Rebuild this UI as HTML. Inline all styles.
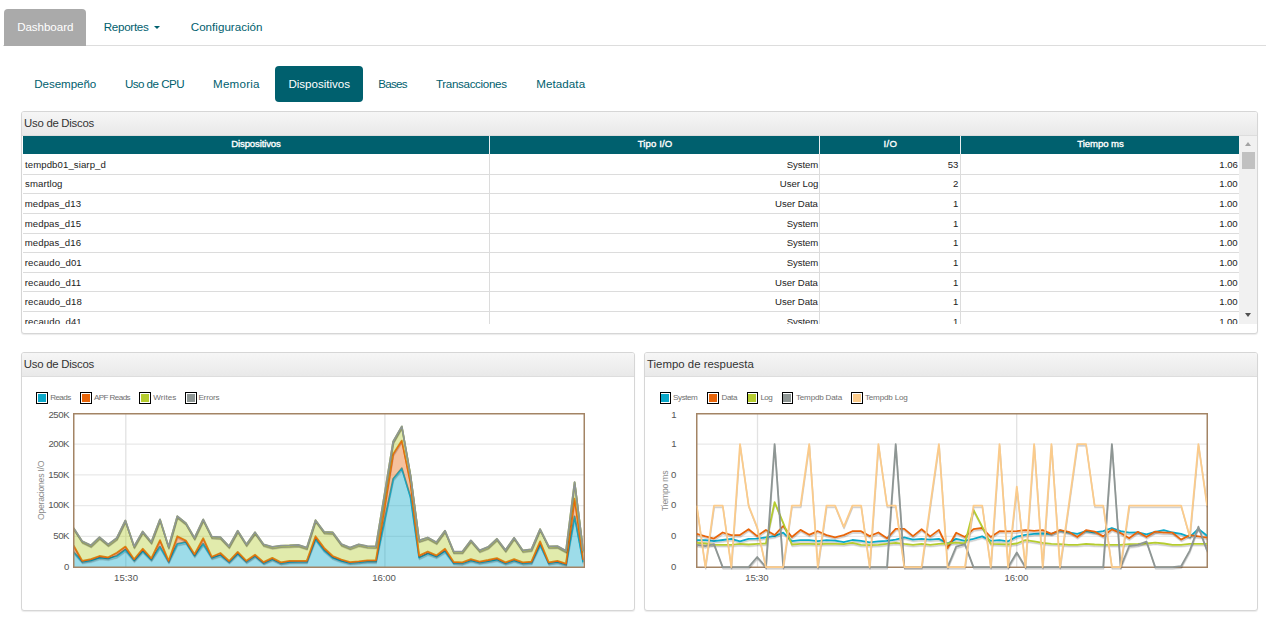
<!DOCTYPE html>
<html lang="es"><head><meta charset="utf-8"><title>Dashboard</title>
<style>
html,body{margin:0;padding:0;background:#fff;}
body{width:1266px;height:619px;position:relative;overflow:hidden;font-family:"Liberation Sans", sans-serif;}
.t{position:absolute;white-space:nowrap;line-height:1;font-family:"Liberation Sans", sans-serif;}
.abs{position:absolute;}
.panel{position:absolute;box-sizing:border-box;border:1px solid #d6d6d6;border-radius:3px;background:#fff;box-shadow:0 1px 1px rgba(0,0,0,.08);}
.phead{position:absolute;left:0;top:0;right:0;height:23px;border-bottom:1px solid #ddd;border-radius:2px 2px 0 0;background:linear-gradient(to bottom,#f6f6f6 0%,#e9e9e9 100%);}
.lg{position:absolute;box-sizing:border-box;width:12px;height:12px;border:1px solid #000;padding:1px;background:#fff;}
.lg i{display:block;width:8px;height:8px;}
.hl{position:absolute;left:23px;width:1217px;height:1px;background:#dcdcdc;}
.vl{position:absolute;top:136px;width:1px;height:188px;background:#dcdcdc;}
.ylab{position:absolute;white-space:nowrap;line-height:1;transform-origin:0 0;transform:rotate(-90deg);color:#8c8c8c;font-size:8.6px;}
</style></head><body>
<div class="abs" style="left:3px;top:45px;width:1263px;height:1px;background:#ddd;"></div>
<div class="abs" style="left:4px;top:9px;width:82px;height:36.5px;background:#aaa;border-radius:4px 4px 0 0;"></div>
<div class="abs" style="left:154px;top:25.9px;width:0;height:0;border-left:3px solid transparent;border-right:3px solid transparent;border-top:3.1px solid #00606e;"></div>
<div class="abs" style="left:275px;top:66px;width:88px;height:35.7px;background:#00606e;border-radius:4px;"></div>
<div class="panel" style="left:21px;top:111px;width:1237px;height:223px;"><div class="phead"></div></div>
<div class="abs" style="left:23px;top:136px;width:1216px;height:18px;background:#00606e;"></div>
<div class="vl" style="left:489px;"></div>
<div class="vl" style="left:819px;"></div>
<div class="vl" style="left:960px;"></div>
<div class="abs" style="left:489px;top:136px;width:1px;height:18px;background:#e8eef0;"></div>
<div class="abs" style="left:819px;top:136px;width:1px;height:18px;background:#e8eef0;"></div>
<div class="abs" style="left:960px;top:136px;width:1px;height:18px;background:#e8eef0;"></div>
<div class="hl" style="top:174px;"></div>
<div class="hl" style="top:193px;"></div>
<div class="hl" style="top:213px;"></div>
<div class="hl" style="top:233px;"></div>
<div class="hl" style="top:252px;"></div>
<div class="hl" style="top:272px;"></div>
<div class="hl" style="top:291px;"></div>
<div class="hl" style="top:311px;"></div>
<div class="abs" style="left:1239px;top:136px;width:18px;height:188px;background:#f1f1f1;"></div>
<div class="abs" style="left:1242px;top:152px;width:13px;height:17px;background:#c1c1c1;"></div>
<div class="abs" style="left:1244.8px;top:141.6px;width:0;height:0;border-left:3.8px solid transparent;border-right:3.8px solid transparent;border-bottom:4.2px solid #a3a3a3;"></div>
<div class="abs" style="left:1244.8px;top:312.6px;width:0;height:0;border-left:3.8px solid transparent;border-right:3.8px solid transparent;border-top:4.2px solid #505050;"></div>
<div class="panel" style="left:21px;top:352px;width:614px;height:259px;"><div class="phead"></div></div>
<div class="panel" style="left:644px;top:352px;width:614px;height:259px;"><div class="phead"></div></div>
<div class="lg" style="left:36px;top:392px;"><i style="background:#0aa8c9"></i></div>
<div class="lg" style="left:80px;top:392px;"><i style="background:#e8650a"></i></div>
<div class="lg" style="left:139px;top:392px;"><i style="background:#b5cc2f"></i></div>
<div class="lg" style="left:185px;top:392px;"><i style="background:#8e9694"></i></div>
<div class="lg" style="left:660px;top:392px;width:11px;padding-left:0;"><i style="background:#0aa8c9"></i></div>
<div class="lg" style="left:707px;top:392px;width:12px;"><i style="background:#e8650a"></i></div>
<div class="lg" style="left:747px;top:392px;width:11px;padding-left:0;"><i style="background:#b5cc2f"></i></div>
<div class="lg" style="left:782px;top:392px;width:11px;padding-left:0;"><i style="background:#8e9694"></i></div>
<div class="lg" style="left:851px;top:392px;width:12px;"><i style="background:#fbcb8b"></i></div>
<svg class="abs" style="left:0;top:340px;" width="1266" height="279" viewBox="0 340 1266 279">
<defs><clipPath id="cl"><rect x="73.6" y="412" width="510" height="158.5"/></clipPath><clipPath id="cr"><rect x="696.6" y="412" width="510.6" height="158.5"/></clipPath></defs>
<line x1="74" x2="584" y1="444.1" y2="444.1" stroke="#e9e9e9" stroke-width="1.3"/>
<line x1="74" x2="584" y1="474.9" y2="474.9" stroke="#e9e9e9" stroke-width="1.3"/>
<line x1="74" x2="584" y1="505.6" y2="505.6" stroke="#e9e9e9" stroke-width="1.3"/>
<line x1="74" x2="584" y1="536.4" y2="536.4" stroke="#e9e9e9" stroke-width="1.3"/>
<line x1="125.8" x2="125.8" y1="414" y2="567" stroke="#e2e2e2" stroke-width="1.3"/>
<line x1="384.9" x2="384.9" y1="414" y2="567" stroke="#e2e2e2" stroke-width="1.3"/>
<g clip-path="url(#cl)">
<polygon points="73.6,551.9 82.2,561.6 90.9,560.3 99.5,557.6 108.2,558.4 116.8,556.0 125.4,549.8 134.1,560.3 142.7,551.1 151.3,559.5 160.0,546.6 168.6,561.6 177.3,543.8 185.9,542.2 194.5,555.6 203.2,543.8 211.8,557.6 220.4,555.0 229.1,561.8 237.7,553.5 246.4,561.6 255.0,556.0 263.6,562.8 272.3,559.2 280.9,563.0 289.5,561.8 298.2,561.6 306.8,561.6 315.5,539.0 324.1,550.3 332.7,557.6 341.4,560.8 350.0,562.9 358.7,562.1 367.3,561.3 375.9,561.3 384.6,520.0 393.2,478.8 401.8,468.3 410.5,497.0 419.1,557.5 427.8,553.4 436.4,556.5 445.0,551.1 453.7,562.9 462.3,563.2 470.9,560.3 479.6,562.4 488.2,561.1 496.9,559.5 505.5,563.2 514.1,560.3 522.8,563.2 531.4,562.7 540.1,544.6 548.7,563.2 557.3,561.9 566.0,564.4 574.6,516.4 583.2,562.4 583.2,567.1 574.6,567.1 566.0,567.1 557.3,567.1 548.7,567.1 540.1,567.1 531.4,567.1 522.8,567.1 514.1,567.1 505.5,567.1 496.9,567.1 488.2,567.1 479.6,567.1 470.9,567.1 462.3,567.1 453.7,567.1 445.0,567.1 436.4,567.1 427.8,567.1 419.1,567.1 410.5,567.1 401.8,567.1 393.2,567.1 384.6,567.1 375.9,567.1 367.3,567.1 358.7,567.1 350.0,567.1 341.4,567.1 332.7,567.1 324.1,567.1 315.5,567.1 306.8,567.1 298.2,567.1 289.5,567.1 280.9,567.1 272.3,567.1 263.6,567.1 255.0,567.1 246.4,567.1 237.7,567.1 229.1,567.1 220.4,567.1 211.8,567.1 203.2,567.1 194.5,567.1 185.9,567.1 177.3,567.1 168.6,567.1 160.0,567.1 151.3,567.1 142.7,567.1 134.1,567.1 125.4,567.1 116.8,567.1 108.2,567.1 99.5,567.1 90.9,567.1 82.2,567.1 73.6,567.1" fill="#0aa8c9" fill-opacity="0.4"/>
<polyline points="74.0,554.1 82.6,563.8 91.3,562.5 99.9,559.8 108.6,560.6 117.2,558.2 125.8,552.0 134.5,562.5 143.1,553.3 151.7,561.7 160.4,548.8 169.0,563.8 177.7,546.0 186.3,544.4 194.9,557.8 203.6,546.0 212.2,559.8 220.8,557.2 229.5,564.0 238.1,555.7 246.8,563.8 255.4,558.2 264.0,565.0 272.7,561.4 281.3,565.2 289.9,564.0 298.6,563.8 307.2,563.8 315.9,541.2 324.5,552.5 333.1,559.8 341.8,563.0 350.4,565.1 359.1,564.3 367.7,563.5 376.3,563.5 385.0,522.2 393.6,481.0 402.2,470.5 410.9,499.2 419.5,559.7 428.2,555.6 436.8,558.7 445.4,553.3 454.1,565.1 462.7,565.4 471.3,562.5 480.0,564.6 488.6,563.3 497.3,561.7 505.9,565.4 514.5,562.5 523.2,565.4 531.8,564.9 540.5,546.8 549.1,565.4 557.7,564.1 566.4,566.6 575.0,518.6 583.6,564.6" fill="none" stroke="#000" stroke-opacity="0.08" stroke-width="1.4" stroke-linejoin="round"/>
<polyline points="73.9,553.4 82.5,563.1 91.2,561.8 99.8,559.1 108.5,559.9 117.1,557.5 125.7,551.3 134.4,561.8 143.0,552.6 151.6,561.0 160.3,548.1 168.9,563.1 177.6,545.3 186.2,543.7 194.8,557.1 203.5,545.3 212.1,559.1 220.7,556.5 229.4,563.3 238.0,555.0 246.7,563.1 255.3,557.5 263.9,564.3 272.6,560.7 281.2,564.5 289.8,563.3 298.5,563.1 307.1,563.1 315.8,540.5 324.4,551.8 333.0,559.1 341.7,562.3 350.3,564.4 359.0,563.6 367.6,562.8 376.2,562.8 384.9,521.5 393.5,480.3 402.1,469.8 410.8,498.5 419.4,559.0 428.1,554.9 436.7,558.0 445.3,552.6 454.0,564.4 462.6,564.7 471.2,561.8 479.9,563.9 488.5,562.6 497.2,561.0 505.8,564.7 514.4,561.8 523.1,564.7 531.7,564.2 540.4,546.1 549.0,564.7 557.6,563.4 566.3,565.9 574.9,517.9 583.5,563.9" fill="none" stroke="#000" stroke-opacity="0.14" stroke-width="1.4" stroke-linejoin="round"/>
<polyline points="73.6,551.9 82.2,561.6 90.9,560.3 99.5,557.6 108.2,558.4 116.8,556.0 125.4,549.8 134.1,560.3 142.7,551.1 151.3,559.5 160.0,546.6 168.6,561.6 177.3,543.8 185.9,542.2 194.5,555.6 203.2,543.8 211.8,557.6 220.4,555.0 229.1,561.8 237.7,553.5 246.4,561.6 255.0,556.0 263.6,562.8 272.3,559.2 280.9,563.0 289.5,561.8 298.2,561.6 306.8,561.6 315.5,539.0 324.1,550.3 332.7,557.6 341.4,560.8 350.0,562.9 358.7,562.1 367.3,561.3 375.9,561.3 384.6,520.0 393.2,478.8 401.8,468.3 410.5,497.0 419.1,557.5 427.8,553.4 436.4,556.5 445.0,551.1 453.7,562.9 462.3,563.2 470.9,560.3 479.6,562.4 488.2,561.1 496.9,559.5 505.5,563.2 514.1,560.3 522.8,563.2 531.4,562.7 540.1,544.6 548.7,563.2 557.3,561.9 566.0,564.4 574.6,516.4 583.2,562.4" fill="none" stroke="#0aa8c9" stroke-width="1.8" stroke-linejoin="round"/>
<polygon points="73.6,545.5 82.2,560.8 90.9,559.2 99.5,556.0 108.2,557.3 116.8,552.7 125.4,546.6 134.1,559.2 142.7,548.7 151.3,558.4 160.0,540.1 168.6,560.8 177.3,536.2 185.9,540.6 194.5,554.3 203.2,538.2 211.8,556.8 220.4,553.0 229.1,561.0 237.7,551.9 246.4,560.8 255.0,554.7 263.6,562.1 272.3,557.9 280.9,562.4 289.5,560.8 298.2,560.8 306.8,560.8 315.5,536.2 324.1,547.9 332.7,556.0 341.4,559.5 350.0,562.1 358.7,561.3 367.3,560.3 375.9,560.3 384.6,507.0 393.2,453.9 401.8,440.6 410.5,482.9 419.1,555.6 427.8,551.5 436.4,555.4 445.0,548.7 453.7,562.0 462.3,562.4 470.9,559.2 479.6,561.6 488.2,560.0 496.9,558.1 505.5,562.4 514.1,559.2 522.8,562.4 531.4,561.6 540.1,541.4 548.7,562.4 557.3,560.8 566.0,563.6 574.6,498.6 583.2,560.0 583.2,562.4 574.6,516.4 566.0,564.4 557.3,561.9 548.7,563.2 540.1,544.6 531.4,562.7 522.8,563.2 514.1,560.3 505.5,563.2 496.9,559.5 488.2,561.1 479.6,562.4 470.9,560.3 462.3,563.2 453.7,562.9 445.0,551.1 436.4,556.5 427.8,553.4 419.1,557.5 410.5,497.0 401.8,468.3 393.2,478.8 384.6,520.0 375.9,561.3 367.3,561.3 358.7,562.1 350.0,562.9 341.4,560.8 332.7,557.6 324.1,550.3 315.5,539.0 306.8,561.6 298.2,561.6 289.5,561.8 280.9,563.0 272.3,559.2 263.6,562.8 255.0,556.0 246.4,561.6 237.7,553.5 229.1,561.8 220.4,555.0 211.8,557.6 203.2,543.8 194.5,555.6 185.9,542.2 177.3,543.8 168.6,561.6 160.0,546.6 151.3,559.5 142.7,551.1 134.1,560.3 125.4,549.8 116.8,556.0 108.2,558.4 99.5,557.6 90.9,560.3 82.2,561.6 73.6,551.9" fill="#e8650a" fill-opacity="0.4"/>
<polyline points="74.0,547.7 82.6,563.0 91.3,561.4 99.9,558.2 108.6,559.5 117.2,554.9 125.8,548.8 134.5,561.4 143.1,550.9 151.7,560.6 160.4,542.3 169.0,563.0 177.7,538.4 186.3,542.8 194.9,556.5 203.6,540.4 212.2,559.0 220.8,555.2 229.5,563.2 238.1,554.1 246.8,563.0 255.4,556.9 264.0,564.3 272.7,560.1 281.3,564.6 289.9,563.0 298.6,563.0 307.2,563.0 315.9,538.4 324.5,550.1 333.1,558.2 341.8,561.7 350.4,564.3 359.1,563.5 367.7,562.5 376.3,562.5 385.0,509.2 393.6,456.1 402.2,442.8 410.9,485.1 419.5,557.8 428.2,553.7 436.8,557.6 445.4,550.9 454.1,564.2 462.7,564.6 471.3,561.4 480.0,563.8 488.6,562.2 497.3,560.3 505.9,564.6 514.5,561.4 523.2,564.6 531.8,563.8 540.5,543.6 549.1,564.6 557.7,563.0 566.4,565.8 575.0,500.8 583.6,562.2" fill="none" stroke="#000" stroke-opacity="0.08" stroke-width="1.4" stroke-linejoin="round"/>
<polyline points="73.9,547.0 82.5,562.3 91.2,560.7 99.8,557.5 108.5,558.8 117.1,554.2 125.7,548.1 134.4,560.7 143.0,550.2 151.6,559.9 160.3,541.6 168.9,562.3 177.6,537.7 186.2,542.1 194.8,555.8 203.5,539.7 212.1,558.3 220.7,554.5 229.4,562.5 238.0,553.4 246.7,562.3 255.3,556.2 263.9,563.6 272.6,559.4 281.2,563.9 289.8,562.3 298.5,562.3 307.1,562.3 315.8,537.7 324.4,549.4 333.0,557.5 341.7,561.0 350.3,563.6 359.0,562.8 367.6,561.8 376.2,561.8 384.9,508.5 393.5,455.4 402.1,442.1 410.8,484.4 419.4,557.1 428.1,553.0 436.7,556.9 445.3,550.2 454.0,563.5 462.6,563.9 471.2,560.7 479.9,563.1 488.5,561.5 497.2,559.6 505.8,563.9 514.4,560.7 523.1,563.9 531.7,563.1 540.4,542.9 549.0,563.9 557.6,562.3 566.3,565.1 574.9,500.1 583.5,561.5" fill="none" stroke="#000" stroke-opacity="0.14" stroke-width="1.4" stroke-linejoin="round"/>
<polyline points="73.6,545.5 82.2,560.8 90.9,559.2 99.5,556.0 108.2,557.3 116.8,552.7 125.4,546.6 134.1,559.2 142.7,548.7 151.3,558.4 160.0,540.1 168.6,560.8 177.3,536.2 185.9,540.6 194.5,554.3 203.2,538.2 211.8,556.8 220.4,553.0 229.1,561.0 237.7,551.9 246.4,560.8 255.0,554.7 263.6,562.1 272.3,557.9 280.9,562.4 289.5,560.8 298.2,560.8 306.8,560.8 315.5,536.2 324.1,547.9 332.7,556.0 341.4,559.5 350.0,562.1 358.7,561.3 367.3,560.3 375.9,560.3 384.6,507.0 393.2,453.9 401.8,440.6 410.5,482.9 419.1,555.6 427.8,551.5 436.4,555.4 445.0,548.7 453.7,562.0 462.3,562.4 470.9,559.2 479.6,561.6 488.2,560.0 496.9,558.1 505.5,562.4 514.1,559.2 522.8,562.4 531.4,561.6 540.1,541.4 548.7,562.4 557.3,560.8 566.0,563.6 574.6,498.6 583.2,560.0" fill="none" stroke="#e8650a" stroke-width="1.8" stroke-linejoin="round"/>
<polygon points="73.6,528.2 82.2,541.4 90.9,545.5 99.5,537.4 108.2,544.6 116.8,538.2 125.4,520.7 134.1,546.6 142.7,531.7 151.3,542.2 160.0,519.6 168.6,547.0 177.3,516.4 185.9,523.3 194.5,538.2 203.2,519.6 211.8,536.9 220.4,537.4 229.1,546.5 237.7,530.9 246.4,544.6 255.0,532.5 263.6,544.6 272.3,547.1 280.9,545.8 289.5,545.5 298.2,545.0 306.8,547.9 315.5,520.4 324.1,532.0 332.7,532.5 341.4,544.3 350.0,547.9 358.7,544.6 367.3,546.3 375.9,546.6 384.6,494.1 393.2,441.7 401.8,426.6 410.5,475.5 419.1,540.5 427.8,537.7 436.4,542.5 445.0,530.9 453.7,551.9 462.3,551.9 470.9,540.6 479.6,550.6 488.2,547.1 496.9,539.0 505.5,550.3 514.1,537.9 522.8,550.6 531.4,549.5 540.1,529.3 548.7,546.6 557.3,546.3 566.0,551.1 574.6,482.4 583.2,551.1 583.2,560.0 574.6,498.6 566.0,563.6 557.3,560.8 548.7,562.4 540.1,541.4 531.4,561.6 522.8,562.4 514.1,559.2 505.5,562.4 496.9,558.1 488.2,560.0 479.6,561.6 470.9,559.2 462.3,562.4 453.7,562.0 445.0,548.7 436.4,555.4 427.8,551.5 419.1,555.6 410.5,482.9 401.8,440.6 393.2,453.9 384.6,507.0 375.9,560.3 367.3,560.3 358.7,561.3 350.0,562.1 341.4,559.5 332.7,556.0 324.1,547.9 315.5,536.2 306.8,560.8 298.2,560.8 289.5,560.8 280.9,562.4 272.3,557.9 263.6,562.1 255.0,554.7 246.4,560.8 237.7,551.9 229.1,561.0 220.4,553.0 211.8,556.8 203.2,538.2 194.5,554.3 185.9,540.6 177.3,536.2 168.6,560.8 160.0,540.1 151.3,558.4 142.7,548.7 134.1,559.2 125.4,546.6 116.8,552.7 108.2,557.3 99.5,556.0 90.9,559.2 82.2,560.8 73.6,545.5" fill="#b5cc2f" fill-opacity="0.4"/>
<polyline points="74.0,530.4 82.6,543.6 91.3,547.7 99.9,539.6 108.6,546.8 117.2,540.4 125.8,522.9 134.5,548.8 143.1,533.9 151.7,544.4 160.4,521.8 169.0,549.2 177.7,518.6 186.3,525.5 194.9,540.4 203.6,521.8 212.2,539.1 220.8,539.6 229.5,548.7 238.1,533.1 246.8,546.8 255.4,534.7 264.0,546.8 272.7,549.3 281.3,548.0 289.9,547.7 298.6,547.2 307.2,550.1 315.9,522.6 324.5,534.2 333.1,534.7 341.8,546.5 350.4,550.1 359.1,546.8 367.7,548.5 376.3,548.8 385.0,496.3 393.6,443.9 402.2,428.8 410.9,477.7 419.5,542.7 428.2,539.9 436.8,544.7 445.4,533.1 454.1,554.1 462.7,554.1 471.3,542.8 480.0,552.8 488.6,549.3 497.3,541.2 505.9,552.5 514.5,540.1 523.2,552.8 531.8,551.7 540.5,531.5 549.1,548.8 557.7,548.5 566.4,553.3 575.0,484.6 583.6,553.3" fill="none" stroke="#000" stroke-opacity="0.08" stroke-width="1.4" stroke-linejoin="round"/>
<polyline points="73.9,529.7 82.5,542.9 91.2,547.0 99.8,538.9 108.5,546.1 117.1,539.7 125.7,522.2 134.4,548.1 143.0,533.2 151.6,543.7 160.3,521.1 168.9,548.5 177.6,517.9 186.2,524.8 194.8,539.7 203.5,521.1 212.1,538.4 220.7,538.9 229.4,548.0 238.0,532.4 246.7,546.1 255.3,534.0 263.9,546.1 272.6,548.6 281.2,547.3 289.8,547.0 298.5,546.5 307.1,549.4 315.8,521.9 324.4,533.5 333.0,534.0 341.7,545.8 350.3,549.4 359.0,546.1 367.6,547.8 376.2,548.1 384.9,495.6 393.5,443.2 402.1,428.1 410.8,477.0 419.4,542.0 428.1,539.2 436.7,544.0 445.3,532.4 454.0,553.4 462.6,553.4 471.2,542.1 479.9,552.1 488.5,548.6 497.2,540.5 505.8,551.8 514.4,539.4 523.1,552.1 531.7,551.0 540.4,530.8 549.0,548.1 557.6,547.8 566.3,552.6 574.9,483.9 583.5,552.6" fill="none" stroke="#000" stroke-opacity="0.14" stroke-width="1.4" stroke-linejoin="round"/>
<polyline points="73.6,528.2 82.2,541.4 90.9,545.5 99.5,537.4 108.2,544.6 116.8,538.2 125.4,520.7 134.1,546.6 142.7,531.7 151.3,542.2 160.0,519.6 168.6,547.0 177.3,516.4 185.9,523.3 194.5,538.2 203.2,519.6 211.8,536.9 220.4,537.4 229.1,546.5 237.7,530.9 246.4,544.6 255.0,532.5 263.6,544.6 272.3,547.1 280.9,545.8 289.5,545.5 298.2,545.0 306.8,547.9 315.5,520.4 324.1,532.0 332.7,532.5 341.4,544.3 350.0,547.9 358.7,544.6 367.3,546.3 375.9,546.6 384.6,494.1 393.2,441.7 401.8,426.6 410.5,475.5 419.1,540.5 427.8,537.7 436.4,542.5 445.0,530.9 453.7,551.9 462.3,551.9 470.9,540.6 479.6,550.6 488.2,547.1 496.9,539.0 505.5,550.3 514.1,537.9 522.8,550.6 531.4,549.5 540.1,529.3 548.7,546.6 557.3,546.3 566.0,551.1 574.6,482.4 583.2,551.1" fill="none" stroke="#b5cc2f" stroke-width="1.8" stroke-linejoin="round"/>
<polyline points="74.0,530.2 82.6,543.4 91.3,547.5 99.9,539.4 108.6,546.6 117.2,540.2 125.8,522.7 134.5,548.6 143.1,533.7 151.7,544.2 160.4,521.6 169.0,549.0 177.7,518.4 186.3,525.3 194.9,540.2 203.6,521.6 212.2,538.9 220.8,539.4 229.5,548.5 238.1,532.9 246.8,546.6 255.4,534.5 264.0,546.6 272.7,549.1 281.3,547.8 289.9,547.5 298.6,547.0 307.2,549.9 315.9,522.4 324.5,534.0 333.1,534.5 341.8,546.3 350.4,549.9 359.1,546.6 367.7,548.3 376.3,548.6 385.0,496.1 393.6,443.7 402.2,428.6 410.9,477.5 419.5,542.5 428.2,539.7 436.8,544.5 445.4,532.9 454.1,553.9 462.7,553.9 471.3,542.6 480.0,552.6 488.6,549.1 497.3,541.0 505.9,552.3 514.5,539.9 523.2,552.6 531.8,551.5 540.5,531.3 549.1,548.6 557.7,548.3 566.4,553.1 575.0,484.4 583.6,553.1" fill="none" stroke="#000" stroke-opacity="0.08" stroke-width="1.4" stroke-linejoin="round"/>
<polyline points="73.9,529.5 82.5,542.7 91.2,546.8 99.8,538.7 108.5,545.9 117.1,539.5 125.7,522.0 134.4,547.9 143.0,533.0 151.6,543.5 160.3,520.9 168.9,548.3 177.6,517.7 186.2,524.6 194.8,539.5 203.5,520.9 212.1,538.2 220.7,538.7 229.4,547.8 238.0,532.2 246.7,545.9 255.3,533.8 263.9,545.9 272.6,548.4 281.2,547.1 289.8,546.8 298.5,546.3 307.1,549.2 315.8,521.7 324.4,533.3 333.0,533.8 341.7,545.6 350.3,549.2 359.0,545.9 367.6,547.6 376.2,547.9 384.9,495.4 393.5,443.0 402.1,427.9 410.8,476.8 419.4,541.8 428.1,539.0 436.7,543.8 445.3,532.2 454.0,553.2 462.6,553.2 471.2,541.9 479.9,551.9 488.5,548.4 497.2,540.3 505.8,551.6 514.4,539.2 523.1,551.9 531.7,550.8 540.4,530.6 549.0,547.9 557.6,547.6 566.3,552.4 574.9,483.7 583.5,552.4" fill="none" stroke="#000" stroke-opacity="0.14" stroke-width="1.4" stroke-linejoin="round"/>
<polyline points="73.6,528.0 82.2,541.2 90.9,545.3 99.5,537.2 108.2,544.4 116.8,538.0 125.4,520.5 134.1,546.4 142.7,531.5 151.3,542.0 160.0,519.4 168.6,546.8 177.3,516.2 185.9,523.1 194.5,538.0 203.2,519.4 211.8,536.7 220.4,537.2 229.1,546.3 237.7,530.7 246.4,544.4 255.0,532.3 263.6,544.4 272.3,546.9 280.9,545.6 289.5,545.3 298.2,544.8 306.8,547.7 315.5,520.2 324.1,531.8 332.7,532.3 341.4,544.1 350.0,547.7 358.7,544.4 367.3,546.1 375.9,546.4 384.6,493.9 393.2,441.5 401.8,426.4 410.5,475.3 419.1,540.3 427.8,537.5 436.4,542.3 445.0,530.7 453.7,551.7 462.3,551.7 470.9,540.4 479.6,550.4 488.2,546.9 496.9,538.8 505.5,550.1 514.1,537.7 522.8,550.4 531.4,549.3 540.1,529.1 548.7,546.4 557.3,546.1 566.0,550.9 574.6,482.2 583.2,550.9" fill="none" stroke="#8e9694" stroke-width="1.8" stroke-linejoin="round"/>
</g>
<rect x="73.75" y="413.75" width="510.5" height="153.5" fill="none" stroke="#a38465" stroke-width="1.5"/>
<line x1="697" x2="1207" y1="444.1" y2="444.1" stroke="#e9e9e9" stroke-width="1.3"/>
<line x1="697" x2="1207" y1="474.9" y2="474.9" stroke="#e9e9e9" stroke-width="1.3"/>
<line x1="697" x2="1207" y1="505.6" y2="505.6" stroke="#e9e9e9" stroke-width="1.3"/>
<line x1="697" x2="1207" y1="536.4" y2="536.4" stroke="#e9e9e9" stroke-width="1.3"/>
<line x1="757.5" x2="757.5" y1="414" y2="567" stroke="#e2e2e2" stroke-width="1.3"/>
<line x1="1016.7" x2="1016.7" y1="414" y2="567" stroke="#e2e2e2" stroke-width="1.3"/>
<rect x="696.75" y="413.75" width="510.5" height="153.5" fill="none" stroke="#a38465" stroke-width="1.5"/>
<g clip-path="url(#cr)">
<polyline points="697.1,542.4 705.8,542.4 714.4,543.3 723.1,542.2 731.7,541.1 740.4,543.5 749.0,541.1 757.6,540.9 766.3,539.6 775.0,538.3 783.6,534.9 792.2,543.3 800.9,542.4 809.6,542.4 818.2,543.3 826.9,542.4 835.5,542.8 844.1,544.4 852.8,542.2 861.5,543.1 870.1,544.6 878.8,543.5 887.4,543.1 896.1,541.8 904.7,539.6 913.4,541.8 922.0,541.1 930.6,541.8 939.3,541.1 948.0,545.7 956.6,541.1 965.3,543.1 973.9,541.1 982.6,538.6 991.2,543.1 999.9,542.4 1008.5,543.5 1017.1,538.8 1025.8,537.0 1034.5,536.0 1043.1,535.7 1051.8,536.0 1060.4,532.7 1069.1,534.7 1077.7,536.0 1086.4,533.4 1095.0,534.7 1103.7,533.4 1112.3,530.2 1121.0,533.4 1129.6,534.9 1138.3,534.7 1146.9,536.6 1155.6,534.0 1164.2,532.4 1172.9,534.7 1181.5,536.0 1190.2,539.2 1198.8,531.1 1207.5,537.9" fill="none" stroke="#000" stroke-opacity="0.08" stroke-width="1.4" stroke-linejoin="round"/>
<polyline points="697.0,541.7 705.6,541.7 714.3,542.6 723.0,541.5 731.6,540.4 740.2,542.8 748.9,540.4 757.5,540.2 766.2,538.9 774.9,537.6 783.5,534.2 792.1,542.6 800.8,541.7 809.5,541.7 818.1,542.6 826.8,541.7 835.4,542.1 844.0,543.7 852.7,541.5 861.4,542.4 870.0,543.9 878.6,542.8 887.3,542.4 896.0,541.1 904.6,538.9 913.2,541.1 921.9,540.4 930.5,541.1 939.2,540.4 947.9,545.0 956.5,540.4 965.2,542.4 973.8,540.4 982.5,537.9 991.1,542.4 999.8,541.7 1008.4,542.8 1017.0,538.1 1025.7,536.3 1034.4,535.3 1043.0,535.0 1051.7,535.3 1060.3,532.0 1069.0,534.0 1077.6,535.3 1086.2,532.7 1094.9,534.0 1103.5,532.7 1112.2,529.5 1120.9,532.7 1129.5,534.2 1138.2,534.0 1146.8,535.9 1155.5,533.3 1164.1,531.7 1172.8,534.0 1181.4,535.3 1190.0,538.5 1198.7,530.4 1207.4,537.2" fill="none" stroke="#000" stroke-opacity="0.14" stroke-width="1.4" stroke-linejoin="round"/>
<polyline points="696.7,540.2 705.4,540.2 714.0,541.1 722.7,540.0 731.3,538.9 740.0,541.3 748.6,538.9 757.2,538.7 765.9,537.4 774.6,536.1 783.2,532.7 791.9,541.1 800.5,540.2 809.2,540.2 817.8,541.1 826.5,540.2 835.1,540.6 843.8,542.2 852.4,540.0 861.1,540.9 869.7,542.4 878.4,541.3 887.0,540.9 895.7,539.6 904.3,537.4 913.0,539.6 921.6,538.9 930.2,539.6 938.9,538.9 947.6,543.5 956.2,538.9 964.9,540.9 973.5,538.9 982.2,536.4 990.8,540.9 999.5,540.2 1008.1,541.3 1016.8,536.6 1025.4,534.8 1034.1,533.8 1042.7,533.5 1051.4,533.8 1060.0,530.5 1068.7,532.5 1077.3,533.8 1086.0,531.2 1094.6,532.5 1103.2,531.2 1111.9,528.0 1120.6,531.2 1129.2,532.7 1137.9,532.5 1146.5,534.4 1155.2,531.8 1163.8,530.2 1172.5,532.5 1181.1,533.8 1189.8,537.0 1198.4,528.9 1207.1,535.7" fill="none" stroke="#0aa8c9" stroke-width="1.8" stroke-linejoin="round"/>
<polyline points="697.1,536.0 705.8,538.6 714.4,540.8 723.1,534.7 731.7,537.3 740.4,537.3 749.0,531.4 757.6,538.3 766.3,532.1 775.0,537.3 783.6,528.2 792.2,539.2 800.9,532.1 809.6,537.0 818.2,533.4 826.9,537.3 835.5,539.5 844.1,537.3 852.8,533.4 861.5,533.4 870.1,538.3 878.8,534.7 887.4,540.5 896.1,531.1 904.7,531.1 913.4,538.3 922.0,531.4 930.6,538.6 939.3,532.1 948.0,550.2 956.6,534.9 965.3,539.2 973.9,531.4 982.6,530.2 991.2,539.2 999.9,533.4 1008.5,533.6 1017.1,533.4 1025.8,532.4 1034.5,533.1 1043.1,532.4 1051.8,536.0 1060.4,532.4 1069.1,534.0 1077.7,539.2 1086.4,532.4 1095.0,533.8 1103.7,538.6 1112.3,531.6 1121.0,535.3 1129.6,540.5 1138.3,534.0 1146.9,539.2 1155.6,533.8 1164.2,534.9 1172.9,534.9 1181.5,541.8 1190.2,537.3 1198.8,538.6 1207.5,539.8" fill="none" stroke="#000" stroke-opacity="0.08" stroke-width="1.4" stroke-linejoin="round"/>
<polyline points="697.0,535.3 705.6,537.9 714.3,540.1 723.0,534.0 731.6,536.6 740.2,536.6 748.9,530.7 757.5,537.6 766.2,531.4 774.9,536.6 783.5,527.5 792.1,538.5 800.8,531.4 809.5,536.3 818.1,532.7 826.8,536.6 835.4,538.8 844.0,536.6 852.7,532.7 861.4,532.7 870.0,537.6 878.6,534.0 887.3,539.8 896.0,530.4 904.6,530.4 913.2,537.6 921.9,530.7 930.5,537.9 939.2,531.4 947.9,549.5 956.5,534.2 965.2,538.5 973.8,530.7 982.5,529.5 991.1,538.5 999.8,532.7 1008.4,532.9 1017.0,532.7 1025.7,531.7 1034.4,532.4 1043.0,531.7 1051.7,535.3 1060.3,531.7 1069.0,533.3 1077.6,538.5 1086.2,531.7 1094.9,533.1 1103.5,537.9 1112.2,530.9 1120.9,534.6 1129.5,539.8 1138.2,533.3 1146.8,538.5 1155.5,533.1 1164.1,534.2 1172.8,534.2 1181.4,541.1 1190.0,536.6 1198.7,537.9 1207.4,539.1" fill="none" stroke="#000" stroke-opacity="0.14" stroke-width="1.4" stroke-linejoin="round"/>
<polyline points="696.7,533.8 705.4,536.4 714.0,538.6 722.7,532.5 731.3,535.1 740.0,535.1 748.6,529.2 757.2,536.1 765.9,529.9 774.6,535.1 783.2,526.0 791.9,537.0 800.5,529.9 809.2,534.8 817.8,531.2 826.5,535.1 835.1,537.3 843.8,535.1 852.4,531.2 861.1,531.2 869.7,536.1 878.4,532.5 887.0,538.3 895.7,528.9 904.3,528.9 913.0,536.1 921.6,529.2 930.2,536.4 938.9,529.9 947.6,548.0 956.2,532.7 964.9,537.0 973.5,529.2 982.2,528.0 990.8,537.0 999.5,531.2 1008.1,531.4 1016.8,531.2 1025.4,530.2 1034.1,530.9 1042.7,530.2 1051.4,533.8 1060.0,530.2 1068.7,531.8 1077.3,537.0 1086.0,530.2 1094.6,531.6 1103.2,536.4 1111.9,529.4 1120.6,533.1 1129.2,538.3 1137.9,531.8 1146.5,537.0 1155.2,531.6 1163.8,532.7 1172.5,532.7 1181.1,539.6 1189.8,535.1 1198.4,536.4 1207.1,537.6" fill="none" stroke="#e8650a" stroke-width="1.8" stroke-linejoin="round"/>
<polyline points="697.1,545.0 705.8,545.7 714.4,547.0 723.1,547.0 731.7,547.0 740.4,546.1 749.0,546.7 757.6,546.1 766.3,545.7 775.0,504.3 783.6,525.0 792.2,546.7 800.9,546.1 809.6,546.1 818.2,546.3 826.9,546.1 835.5,546.1 844.1,546.3 852.8,545.0 861.5,547.0 870.1,547.3 878.8,547.0 887.4,546.1 896.1,545.0 904.7,546.1 913.4,547.0 922.0,546.1 930.6,547.0 939.3,546.1 948.0,545.7 956.6,544.8 965.3,545.7 973.9,512.1 982.6,528.9 991.2,546.1 999.9,546.3 1008.5,546.7 1017.1,545.7 1025.8,542.4 1034.5,543.5 1043.1,545.0 1051.8,546.1 1060.4,546.3 1069.1,547.0 1077.7,547.0 1086.4,546.1 1095.0,546.7 1103.7,547.0 1112.3,547.0 1121.0,547.0 1129.6,546.3 1138.3,546.1 1146.9,545.7 1155.6,544.8 1164.2,545.7 1172.9,547.0 1181.5,547.0 1190.2,546.1 1198.8,546.1 1207.5,546.1" fill="none" stroke="#000" stroke-opacity="0.08" stroke-width="1.4" stroke-linejoin="round"/>
<polyline points="697.0,544.3 705.6,545.0 714.3,546.3 723.0,546.3 731.6,546.3 740.2,545.4 748.9,546.0 757.5,545.4 766.2,545.0 774.9,503.6 783.5,524.3 792.1,546.0 800.8,545.4 809.5,545.4 818.1,545.6 826.8,545.4 835.4,545.4 844.0,545.6 852.7,544.3 861.4,546.3 870.0,546.6 878.6,546.3 887.3,545.4 896.0,544.3 904.6,545.4 913.2,546.3 921.9,545.4 930.5,546.3 939.2,545.4 947.9,545.0 956.5,544.1 965.2,545.0 973.8,511.4 982.5,528.2 991.1,545.4 999.8,545.6 1008.4,546.0 1017.0,545.0 1025.7,541.7 1034.4,542.8 1043.0,544.3 1051.7,545.4 1060.3,545.6 1069.0,546.3 1077.6,546.3 1086.2,545.4 1094.9,546.0 1103.5,546.3 1112.2,546.3 1120.9,546.3 1129.5,545.6 1138.2,545.4 1146.8,545.0 1155.5,544.1 1164.1,545.0 1172.8,546.3 1181.4,546.3 1190.0,545.4 1198.7,545.4 1207.4,545.4" fill="none" stroke="#000" stroke-opacity="0.14" stroke-width="1.4" stroke-linejoin="round"/>
<polyline points="696.7,542.8 705.4,543.5 714.0,544.8 722.7,544.8 731.3,544.8 740.0,543.9 748.6,544.5 757.2,543.9 765.9,543.5 774.6,502.1 783.2,522.8 791.9,544.5 800.5,543.9 809.2,543.9 817.8,544.1 826.5,543.9 835.1,543.9 843.8,544.1 852.4,542.8 861.1,544.8 869.7,545.1 878.4,544.8 887.0,543.9 895.7,542.8 904.3,543.9 913.0,544.8 921.6,543.9 930.2,544.8 938.9,543.9 947.6,543.5 956.2,542.6 964.9,543.5 973.5,509.9 982.2,526.7 990.8,543.9 999.5,544.1 1008.1,544.5 1016.8,543.5 1025.4,540.2 1034.1,541.3 1042.7,542.8 1051.4,543.9 1060.0,544.1 1068.7,544.8 1077.3,544.8 1086.0,543.9 1094.6,544.5 1103.2,544.8 1111.9,544.8 1120.6,544.8 1129.2,544.1 1137.9,543.9 1146.5,543.5 1155.2,542.6 1163.8,543.5 1172.5,544.8 1181.1,544.8 1189.8,543.9 1198.4,543.9 1207.1,543.9" fill="none" stroke="#b5cc2f" stroke-width="1.8" stroke-linejoin="round"/>
<polyline points="697.1,547.0 705.8,548.2 714.4,546.3 723.1,569.3 731.7,569.3 740.4,569.3 749.0,569.3 757.6,559.2 766.3,569.3 775.0,446.3 783.6,569.3 792.2,569.3 800.9,569.3 809.6,569.3 818.2,569.3 826.9,569.3 835.5,569.3 844.1,569.3 852.8,569.3 861.5,569.3 870.1,569.3 878.8,569.3 887.4,569.3 896.1,446.3 904.7,569.3 913.4,569.3 922.0,569.3 930.6,569.3 939.3,569.3 948.0,569.3 956.6,548.9 965.3,546.3 973.9,569.3 982.6,569.3 991.2,569.3 999.9,569.3 1008.5,569.3 1017.1,554.7 1025.8,569.3 1034.5,569.3 1043.1,569.3 1051.8,569.3 1060.4,569.3 1069.1,569.3 1077.7,569.3 1086.4,569.3 1095.0,569.3 1103.7,569.3 1112.3,446.3 1121.0,569.3 1129.6,548.2 1138.3,547.0 1146.9,543.7 1155.6,569.3 1164.2,569.3 1172.9,569.3 1181.5,568.4 1190.2,552.8 1198.8,528.9 1207.5,552.8" fill="none" stroke="#000" stroke-opacity="0.08" stroke-width="1.4" stroke-linejoin="round"/>
<polyline points="697.0,546.3 705.6,547.5 714.3,545.6 723.0,568.6 731.6,568.6 740.2,568.6 748.9,568.6 757.5,558.5 766.2,568.6 774.9,445.6 783.5,568.6 792.1,568.6 800.8,568.6 809.5,568.6 818.1,568.6 826.8,568.6 835.4,568.6 844.0,568.6 852.7,568.6 861.4,568.6 870.0,568.6 878.6,568.6 887.3,568.6 896.0,445.6 904.6,568.6 913.2,568.6 921.9,568.6 930.5,568.6 939.2,568.6 947.9,568.6 956.5,548.2 965.2,545.6 973.8,568.6 982.5,568.6 991.1,568.6 999.8,568.6 1008.4,568.6 1017.0,554.0 1025.7,568.6 1034.4,568.6 1043.0,568.6 1051.7,568.6 1060.3,568.6 1069.0,568.6 1077.6,568.6 1086.2,568.6 1094.9,568.6 1103.5,568.6 1112.2,445.6 1120.9,568.6 1129.5,547.5 1138.2,546.3 1146.8,543.0 1155.5,568.6 1164.1,568.6 1172.8,568.6 1181.4,567.7 1190.0,552.1 1198.7,528.2 1207.4,552.1" fill="none" stroke="#000" stroke-opacity="0.14" stroke-width="1.4" stroke-linejoin="round"/>
<polyline points="696.7,544.8 705.4,546.0 714.0,544.1 722.7,567.1 731.3,567.1 740.0,567.1 748.6,567.1 757.2,557.0 765.9,567.1 774.6,444.1 783.2,567.1 791.9,567.1 800.5,567.1 809.2,567.1 817.8,567.1 826.5,567.1 835.1,567.1 843.8,567.1 852.4,567.1 861.1,567.1 869.7,567.1 878.4,567.1 887.0,567.1 895.7,444.1 904.3,567.1 913.0,567.1 921.6,567.1 930.2,567.1 938.9,567.1 947.6,567.1 956.2,546.7 964.9,544.1 973.5,567.1 982.2,567.1 990.8,567.1 999.5,567.1 1008.1,567.1 1016.8,552.5 1025.4,567.1 1034.1,567.1 1042.7,567.1 1051.4,567.1 1060.0,567.1 1068.7,567.1 1077.3,567.1 1086.0,567.1 1094.6,567.1 1103.2,567.1 1111.9,444.1 1120.6,567.1 1129.2,546.0 1137.9,544.8 1146.5,541.5 1155.2,567.1 1163.8,567.1 1172.5,567.1 1181.1,566.2 1189.8,550.6 1198.4,526.7 1207.1,550.6" fill="none" stroke="#8e9694" stroke-width="1.8" stroke-linejoin="round"/>
<polyline points="697.1,507.8 705.8,569.3 714.4,507.8 723.1,507.8 731.7,569.3 740.4,446.3 749.0,507.8 757.6,529.6 766.3,569.3 775.0,569.3 783.6,569.3 792.2,507.8 800.9,507.8 809.6,446.3 818.2,569.3 826.9,507.8 835.5,507.8 844.1,529.0 852.8,507.8 861.5,507.8 870.1,569.3 878.8,446.3 887.4,507.8 896.1,507.8 904.7,569.3 913.4,569.3 922.0,569.3 930.6,507.8 939.3,446.3 948.0,569.3 956.6,569.3 965.3,569.3 973.9,507.8 982.6,507.8 991.2,569.3 999.9,446.3 1008.5,569.3 1017.1,488.9 1025.8,569.3 1034.5,446.3 1043.1,569.3 1051.8,446.3 1060.4,569.3 1069.1,507.8 1077.7,446.3 1086.4,446.3 1095.0,507.8 1103.7,507.8 1112.3,569.3 1121.0,569.3 1129.6,507.8 1138.3,507.8 1146.9,507.8 1155.6,507.8 1164.2,507.8 1172.9,507.8 1181.5,507.8 1190.2,538.8 1198.8,446.3 1207.5,507.8" fill="none" stroke="#000" stroke-opacity="0.08" stroke-width="1.4" stroke-linejoin="round"/>
<polyline points="697.0,507.1 705.6,568.6 714.3,507.1 723.0,507.1 731.6,568.6 740.2,445.6 748.9,507.1 757.5,528.9 766.2,568.6 774.9,568.6 783.5,568.6 792.1,507.1 800.8,507.1 809.5,445.6 818.1,568.6 826.8,507.1 835.4,507.1 844.0,528.3 852.7,507.1 861.4,507.1 870.0,568.6 878.6,445.6 887.3,507.1 896.0,507.1 904.6,568.6 913.2,568.6 921.9,568.6 930.5,507.1 939.2,445.6 947.9,568.6 956.5,568.6 965.2,568.6 973.8,507.1 982.5,507.1 991.1,568.6 999.8,445.6 1008.4,568.6 1017.0,488.2 1025.7,568.6 1034.4,445.6 1043.0,568.6 1051.7,445.6 1060.3,568.6 1069.0,507.1 1077.6,445.6 1086.2,445.6 1094.9,507.1 1103.5,507.1 1112.2,568.6 1120.9,568.6 1129.5,507.1 1138.2,507.1 1146.8,507.1 1155.5,507.1 1164.1,507.1 1172.8,507.1 1181.4,507.1 1190.0,538.1 1198.7,445.6 1207.4,507.1" fill="none" stroke="#000" stroke-opacity="0.14" stroke-width="1.4" stroke-linejoin="round"/>
<polyline points="696.7,505.6 705.4,567.1 714.0,505.6 722.7,505.6 731.3,567.1 740.0,444.1 748.6,505.6 757.2,527.4 765.9,567.1 774.6,567.1 783.2,567.1 791.9,505.6 800.5,505.6 809.2,444.1 817.8,567.1 826.5,505.6 835.1,505.6 843.8,526.8 852.4,505.6 861.1,505.6 869.7,567.1 878.4,444.1 887.0,505.6 895.7,505.6 904.3,567.1 913.0,567.1 921.6,567.1 930.2,505.6 938.9,444.1 947.6,567.1 956.2,567.1 964.9,567.1 973.5,505.6 982.2,505.6 990.8,567.1 999.5,444.1 1008.1,567.1 1016.8,486.7 1025.4,567.1 1034.1,444.1 1042.7,567.1 1051.4,444.1 1060.0,567.1 1068.7,505.6 1077.3,444.1 1086.0,444.1 1094.6,505.6 1103.2,505.6 1111.9,567.1 1120.6,567.1 1129.2,505.6 1137.9,505.6 1146.5,505.6 1155.2,505.6 1163.8,505.6 1172.5,505.6 1181.1,505.6 1189.8,536.6 1198.4,444.1 1207.1,505.6" fill="none" stroke="#fbcb8b" stroke-width="1.8" stroke-linejoin="round"/>
</g>
</svg>
<div class="ylab" style="left:36.8px;top:520.3px;letter-spacing:-0.23px;">Operaciones I/O</div>
<div class="ylab" style="left:660.8px;top:511.1px;letter-spacing:-0.2px;">Tiempo ms</div>
<span class="t" id="t0" style="font-size:11.6px;color:#fff;left:17.15px;top:21.18px;letter-spacing:-0.056px;">Dashboard</span>
<span class="t" id="t1" style="font-size:11.6px;color:#00606e;left:103.80px;top:21.18px;letter-spacing:-0.297px;">Reportes</span>
<span class="t" id="t2" style="font-size:11.6px;color:#00606e;left:190.77px;top:21.18px;letter-spacing:0.019px;">Configuración</span>
<span class="t" id="t3" style="font-size:11.6px;color:#00606e;left:34.34px;top:78.18px;letter-spacing:-0.080px;">Desempeño</span>
<span class="t" id="t4" style="font-size:11.6px;color:#00606e;left:124.92px;top:78.18px;letter-spacing:-0.532px;">Uso de CPU</span>
<span class="t" id="t5" style="font-size:11.6px;color:#00606e;left:213.08px;top:78.18px;letter-spacing:0.217px;">Memoria</span>
<span class="t" id="t6" style="font-size:11.6px;color:#fff;left:288.38px;top:78.18px;letter-spacing:-0.022px;">Dispositivos</span>
<span class="t" id="t7" style="font-size:11.6px;color:#00606e;left:378.33px;top:78.18px;letter-spacing:-0.759px;">Bases</span>
<span class="t" id="t8" style="font-size:11.6px;color:#00606e;left:436.00px;top:78.18px;letter-spacing:-0.333px;">Transacciones</span>
<span class="t" id="t9" style="font-size:11.6px;color:#00606e;left:536.34px;top:78.18px;letter-spacing:0.058px;">Metadata</span>
<span class="t" id="t10" style="font-size:11.4px;color:#333;left:24.09px;top:117.95px;letter-spacing:-0.281px;">Uso de Discos</span>
<span class="t" id="t11" style="font-size:11.4px;color:#333;left:23.82px;top:358.85px;letter-spacing:-0.255px;">Uso de Discos</span>
<span class="t" id="t12" style="font-size:11.4px;color:#333;left:647.00px;top:358.85px;letter-spacing:0.012px;">Tiempo de respuesta</span>
<span class="t" id="t13" style="font-size:9.6px;color:#fff;left:231.20px;top:139.37px;-webkit-text-stroke:0.35px #fff;letter-spacing:-0.139px;">Dispositivos</span>
<span class="t" id="t14" style="font-size:9.6px;color:#fff;left:637.65px;top:139.37px;-webkit-text-stroke:0.35px #fff;letter-spacing:0.124px;">Tipo I/O</span>
<span class="t" id="t15" style="font-size:9.6px;color:#fff;left:883.60px;top:139.37px;-webkit-text-stroke:0.35px #fff;letter-spacing:0.350px;">I/O</span>
<span class="t" id="t16" style="font-size:9.6px;color:#fff;left:1077.35px;top:139.37px;-webkit-text-stroke:0.35px #fff;letter-spacing:-0.089px;">Tiempo ms</span>
<div class="abs" style="left:0;top:154px;width:1240px;height:170px;overflow:hidden;">
<span class="t" id="t17" style="font-size:9.6px;color:#222;left:25.00px;top:5.77px;letter-spacing:0.09px;">tempdb01_siarp_d</span>
<span class="t" id="t18" style="font-size:9.6px;color:#222;right:421.70px;top:5.77px;letter-spacing:-0.05px;">System</span>
<span class="t" id="t19" style="font-size:9.6px;color:#222;right:281.74px;top:5.77px;letter-spacing:-0.05px;">53</span>
<span class="t" id="t20" style="font-size:9.6px;color:#222;right:2.16px;top:5.77px;letter-spacing:-0.05px;">1.06</span>
<span class="t" id="t21" style="font-size:9.6px;color:#222;left:25.00px;top:25.47px;letter-spacing:0.09px;">smartlog</span>
<span class="t" id="t22" style="font-size:9.6px;color:#222;right:421.70px;top:25.47px;letter-spacing:-0.05px;">User Log</span>
<span class="t" id="t23" style="font-size:9.6px;color:#222;right:281.72px;top:25.47px;letter-spacing:-0.05px;">2</span>
<span class="t" id="t24" style="font-size:9.6px;color:#222;right:2.38px;top:25.47px;letter-spacing:-0.05px;">1.00</span>
<span class="t" id="t25" style="font-size:9.6px;color:#222;left:24.78px;top:44.57px;letter-spacing:0.09px;">medpas_d13</span>
<span class="t" id="t26" style="font-size:9.6px;color:#222;right:422.17px;top:44.57px;letter-spacing:-0.05px;">User Data</span>
<span class="t" id="t27" style="font-size:9.6px;color:#222;right:281.71px;top:44.57px;letter-spacing:-0.05px;">1</span>
<span class="t" id="t28" style="font-size:9.6px;color:#222;right:2.38px;top:44.57px;letter-spacing:-0.05px;">1.00</span>
<span class="t" id="t29" style="font-size:9.6px;color:#222;left:24.78px;top:65.17px;letter-spacing:0.09px;">medpas_d15</span>
<span class="t" id="t30" style="font-size:9.6px;color:#222;right:421.70px;top:65.17px;letter-spacing:-0.05px;">System</span>
<span class="t" id="t31" style="font-size:9.6px;color:#222;right:281.71px;top:65.17px;letter-spacing:-0.05px;">1</span>
<span class="t" id="t32" style="font-size:9.6px;color:#222;right:2.38px;top:65.17px;letter-spacing:-0.05px;">1.00</span>
<span class="t" id="t33" style="font-size:9.6px;color:#222;left:24.78px;top:83.97px;letter-spacing:0.09px;">medpas_d16</span>
<span class="t" id="t34" style="font-size:9.6px;color:#222;right:421.70px;top:83.97px;letter-spacing:-0.05px;">System</span>
<span class="t" id="t35" style="font-size:9.6px;color:#222;right:281.71px;top:83.97px;letter-spacing:-0.05px;">1</span>
<span class="t" id="t36" style="font-size:9.6px;color:#222;right:2.38px;top:83.97px;letter-spacing:-0.05px;">1.00</span>
<span class="t" id="t37" style="font-size:9.6px;color:#222;left:24.80px;top:103.87px;letter-spacing:0.09px;">recaudo_d01</span>
<span class="t" id="t38" style="font-size:9.6px;color:#222;right:421.70px;top:103.87px;letter-spacing:-0.05px;">System</span>
<span class="t" id="t39" style="font-size:9.6px;color:#222;right:281.71px;top:103.87px;letter-spacing:-0.05px;">1</span>
<span class="t" id="t40" style="font-size:9.6px;color:#222;right:2.38px;top:103.87px;letter-spacing:-0.05px;">1.00</span>
<span class="t" id="t41" style="font-size:9.6px;color:#222;left:24.80px;top:123.77px;letter-spacing:0.09px;">recaudo_d11</span>
<span class="t" id="t42" style="font-size:9.6px;color:#222;right:422.17px;top:123.77px;letter-spacing:-0.05px;">User Data</span>
<span class="t" id="t43" style="font-size:9.6px;color:#222;right:281.71px;top:123.77px;letter-spacing:-0.05px;">1</span>
<span class="t" id="t44" style="font-size:9.6px;color:#222;right:2.38px;top:123.77px;letter-spacing:-0.05px;">1.00</span>
<span class="t" id="t45" style="font-size:9.6px;color:#222;left:24.82px;top:142.77px;letter-spacing:0.09px;">recaudo_d18</span>
<span class="t" id="t46" style="font-size:9.6px;color:#222;right:422.17px;top:142.77px;letter-spacing:-0.05px;">User Data</span>
<span class="t" id="t47" style="font-size:9.6px;color:#222;right:281.71px;top:142.77px;letter-spacing:-0.05px;">1</span>
<span class="t" id="t48" style="font-size:9.6px;color:#222;right:2.38px;top:142.77px;letter-spacing:-0.05px;">1.00</span>
<span class="t" id="t49" style="font-size:9.6px;color:#222;left:24.80px;top:162.77px;letter-spacing:0.09px;">recaudo_d41</span>
<span class="t" id="t50" style="font-size:9.6px;color:#222;right:421.70px;top:162.77px;letter-spacing:-0.05px;">System</span>
<span class="t" id="t51" style="font-size:9.6px;color:#222;right:281.71px;top:162.77px;letter-spacing:-0.05px;">1</span>
<span class="t" id="t52" style="font-size:9.6px;color:#222;right:2.38px;top:162.77px;letter-spacing:-0.05px;">1.00</span>
</div>
<span class="t" id="t53" style="font-size:8.1px;color:#707070;left:50.20px;top:393.84px;letter-spacing:-0.597px;">Reads</span>
<span class="t" id="t54" style="font-size:8.1px;color:#707070;left:94.00px;top:393.84px;letter-spacing:-0.600px;">APF Reads</span>
<span class="t" id="t55" style="font-size:8.1px;color:#707070;left:153.30px;top:393.84px;letter-spacing:0.058px;">Writes</span>
<span class="t" id="t56" style="font-size:8.1px;color:#707070;left:198.40px;top:393.84px;letter-spacing:-0.174px;">Errors</span>
<span class="t" id="t57" style="font-size:8.1px;color:#707070;left:673.10px;top:393.84px;letter-spacing:-0.446px;">System</span>
<span class="t" id="t58" style="font-size:8.1px;color:#707070;left:721.49px;top:393.84px;letter-spacing:-0.364px;">Data</span>
<span class="t" id="t59" style="font-size:8.1px;color:#707070;left:760.40px;top:393.84px;letter-spacing:-0.550px;">Log</span>
<span class="t" id="t60" style="font-size:8.1px;color:#707070;left:795.92px;top:393.84px;letter-spacing:-0.190px;">Tempdb Data</span>
<span class="t" id="t61" style="font-size:8.1px;color:#707070;left:864.88px;top:393.84px;letter-spacing:-0.174px;">Tempdb Log</span>
<span class="t" id="t62" style="font-size:9.6px;color:#545454;right:1196.93px;top:409.67px;letter-spacing:-0.45px;">250K</span>
<span class="t" id="t63" style="font-size:9.6px;color:#545454;right:1196.94px;top:438.77px;letter-spacing:-0.45px;">200K</span>
<span class="t" id="t64" style="font-size:9.6px;color:#545454;right:1197.10px;top:469.57px;letter-spacing:-0.45px;">150K</span>
<span class="t" id="t65" style="font-size:9.6px;color:#545454;right:1197.10px;top:500.27px;letter-spacing:-0.45px;">100K</span>
<span class="t" id="t66" style="font-size:9.6px;color:#545454;right:1196.93px;top:531.07px;letter-spacing:-0.45px;">50K</span>
<span class="t" id="t67" style="font-size:9.6px;color:#545454;right:1197.09px;top:561.77px;letter-spacing:-0.45px;">0</span>
<span class="t" id="t68" style="font-size:9.6px;color:#545454;right:589.46px;top:409.67px;">1</span>
<span class="t" id="t69" style="font-size:9.6px;color:#545454;right:589.46px;top:438.77px;">1</span>
<span class="t" id="t70" style="font-size:9.6px;color:#545454;right:589.67px;top:469.57px;">0</span>
<span class="t" id="t71" style="font-size:9.6px;color:#545454;right:589.67px;top:500.27px;">0</span>
<span class="t" id="t72" style="font-size:9.6px;color:#545454;right:589.67px;top:531.07px;">0</span>
<span class="t" id="t73" style="font-size:9.6px;color:#545454;right:589.67px;top:561.77px;">0</span>
<span class="t" id="t74" style="font-size:9.6px;color:#545454;left:114.07px;top:572.67px;letter-spacing:-0.011px;">15:30</span>
<span class="t" id="t75" style="font-size:9.6px;color:#545454;left:372.27px;top:572.67px;letter-spacing:-0.083px;">16:00</span>
<span class="t" id="t76" style="font-size:9.6px;color:#545454;left:745.27px;top:572.67px;letter-spacing:-0.183px;">15:30</span>
<span class="t" id="t77" style="font-size:9.6px;color:#545454;left:1004.53px;top:572.67px;letter-spacing:-0.032px;">16:00</span>
</body></html>
